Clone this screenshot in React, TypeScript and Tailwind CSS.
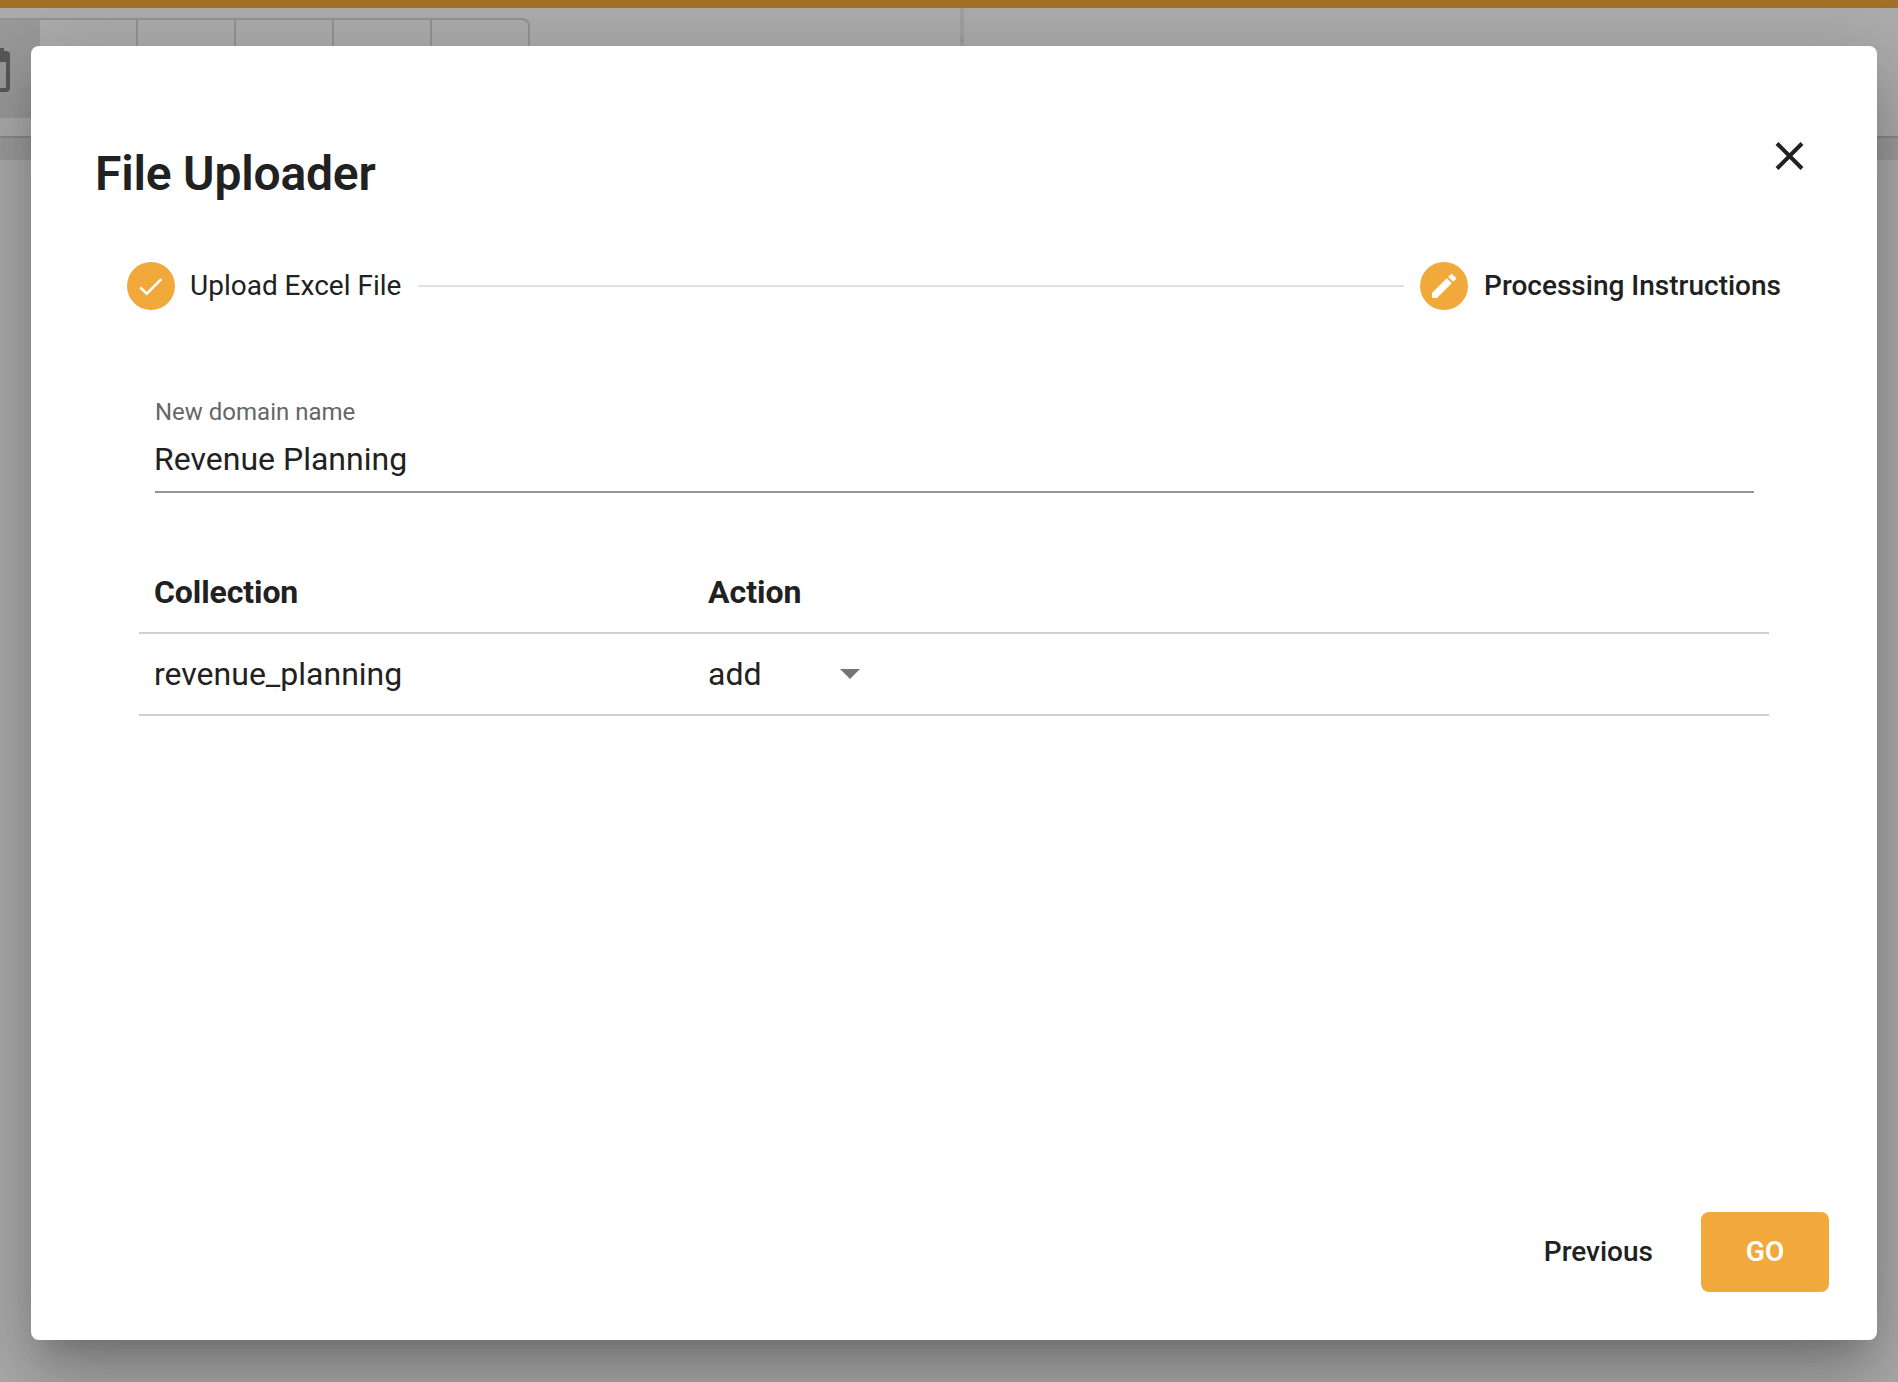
function Backdrop() {
  return (
    <div className="h-full w-full bg-white">
      <div className="h-2 bg-[#f0a93b]" />
      <div className="flex h-32">
        <div className="w-[960px] pt-2.5">
          <div className="flex h-[100px]">
            <div className="flex w-10 items-start border-t-2 border-[#dadada] bg-[#e4e4e4] pt-7">
              <svg width="10" height="44" viewBox="0 0 10 44" fill="#828282">
                <path d="M0 0h4v3h2a4 4 0 0 1 4 4v33a4 4 0 0 1-4 4H0v-4h6V14H0z" />
              </svg>
            </div>
            <div className="w-[98px] border-t-2 border-r-2 border-[#dadada]" />
            <div className="w-[98px] border-t-2 border-r-2 border-[#dadada]" />
            <div className="w-[98px] border-t-2 border-r-2 border-[#dadada]" />
            <div className="w-[98px] border-t-2 border-r-2 border-[#dadada]" />
            <div className="w-[98px] rounded-tr-lg border-t-2 border-r-2 border-[#dadada]" />
          </div>
        </div>
        <div className="flex w-1 flex-col bg-[#eeeeee] pt-[30px]">
          <div className="h-1 bg-[#e2e2e2]" />
        </div>
      </div>
      <div className="h-6 border-t-2 border-[#cccccc] bg-[#e8e8e8]" />
    </div>
  );
}

function Stepper() {
  return (
    <div className="flex h-12 items-center text-[28px]">
      <div className="flex size-12 items-center justify-center rounded-full bg-[#f1a93c] pr-0.5">
        <svg width="31" height="31" viewBox="0 0 24 24" fill="#fff">
          <path d="M9 16.17L4.83 12l-1.42 1.41L9 19 21 7l-1.41-1.41z" />
        </svg>
      </div>
      <span className="ml-[15px]">Upload Excel File</span>
      <div className="mr-4 ml-[17px] h-0.5 flex-1 bg-[#e0e0e0]" />
      <div className="flex size-12 items-center justify-center rounded-full bg-[#f1a93c]">
        <svg width="32" height="32" viewBox="0 0 24 24" fill="#fff">
          <path d="M3 17.25V21h3.75L17.81 9.94l-3.75-3.75L3 17.25zM20.71 7.04a.996.996 0 0 0 0-1.41l-2.34-2.34a.996.996 0 0 0-1.41 0l-1.83 1.83 3.75 3.75 1.83-1.83z" />
        </svg>
      </div>
      <span className="ml-4 font-medium">Processing Instructions</span>
    </div>
  );
}

export default function App() {
  return (
    <div className="relative h-[1382px] w-[1898px] overflow-hidden font-['Roboto',sans-serif] text-[#212121]">
      <Backdrop />
      <div className="absolute inset-0 bg-black/32 pt-[46px] pl-[31px]">
        <div className="flex h-[1294px] w-[1846px] flex-col rounded-lg bg-white shadow-[0_22px_30px_-14px_rgba(0,0,0,0.2),0_48px_76px_6px_rgba(0,0,0,0.14),0_18px_92px_16px_rgba(0,0,0,0.12)]">
          <div className="flex items-start justify-between pt-24 pr-[67px] pl-16">
            <h1 className="text-[48px] leading-[64px] font-semibold tracking-[-0.2px]">File Uploader</h1>
            <button className="-mt-[6px]">
              <svg width="40" height="40" viewBox="0 0 40 40" fill="none" stroke="#212121" strokeWidth="4">
                <path d="M7 7.5L32 32.5M32 7.5L7 32.5" />
              </svg>
            </button>
          </div>
          <div className="mt-14 pr-24 pl-24">
            <Stepper />
          </div>
          <div className="mx-[108px] mt-[86px]">
            <div className="mr-[15px] ml-4 flex h-[97px] flex-col border-b-2 border-[#949494]">
              <label className="text-[24px] leading-8 text-[#666666]">New domain name</label>
              <div className="-ml-px mt-[11px] text-[32px] leading-10">Revenue Planning</div>
            </div>
            <div className="mt-[59px] text-[32px]">
              <div className="flex h-[82px] items-center border-b-2 border-[#d0d0d0] pr-4 pl-[15px] font-bold">
                <div className="w-[554px] tracking-[-0.1px]">Collection</div>
                <div>Action</div>
              </div>
              <div className="flex h-[82px] items-center border-b-2 border-[#d0d0d0] pr-4 pl-[15px]">
                <div className="w-[554px]">revenue_planning</div>
                <div className="flex w-[152px] items-center justify-between">
                  <span>add</span>
                  <svg width="20" height="10" viewBox="0 0 20 10" fill="#757575">
                    <path d="M0 0h20L10 10z" />
                  </svg>
                </div>
              </div>
            </div>
          </div>
          <div className="mt-auto flex items-center justify-end gap-12 pr-12 pb-12 text-[28px] font-medium">
            <button>Previous</button>
            <button className="h-20 w-32 rounded-lg bg-[#f1a93c] font-semibold text-white">GO</button>
          </div>
        </div>
      </div>
    </div>
  );
}
